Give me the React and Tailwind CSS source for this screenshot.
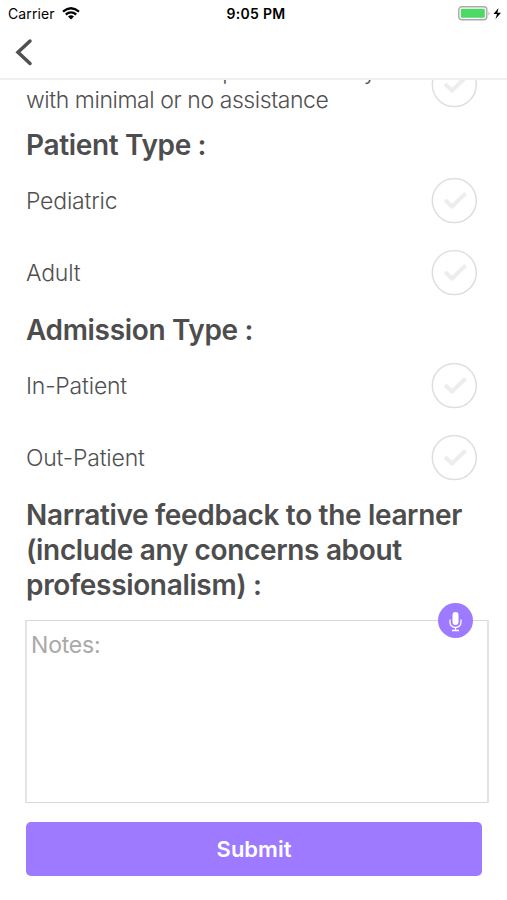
import React from "react";

function Check() {
  return (
    <svg className="h-[46px] w-[46px] shrink-0" viewBox="0 0 46 46" fill="none">
      <circle cx="23.3" cy="22.6" r="22" stroke="#dedede" strokeWidth="1.5" />
      <path d="M14 22l7 6.5L34.5 15.5" stroke="#ededed" strokeWidth="4" />
    </svg>
  );
}

function Option({ label }) {
  return (
    <div className="flex h-[72px] items-center justify-between pr-[30px]">
      <span className="text-[23px] font-light tracking-[-0.2px]">{label}</span>
      <Check />
    </div>
  );
}

function Heading({ children }) {
  return <h2 className="text-[28px] font-semibold leading-[35px] tracking-[-0.34px] whitespace-nowrap text-[#4d4d4d]">{children}</h2>;
}

export default function App() {
  return (
    <div className="flex h-[900px] w-[507px] flex-col overflow-hidden bg-white font-['Inter',sans-serif] text-[#505050]">
      <header className="relative z-10 h-[80px] shrink-0 border-b-2 border-[#f0f0f0] bg-white">
        <div className="grid h-[27px] grid-cols-3 items-center pl-2 pr-[5px] text-black">
          <div className="flex items-center gap-[7px]">
            <span className="text-[14px] tracking-[0.1px]">Carrier</span>
            <svg width="18" height="13" viewBox="0 0 18 13" fill="none" stroke="#000" strokeWidth="2.3">
              <path d="M1 4.6Q9-2 17 4.6M3.8 7.5Q9 3.2 14.2 7.5" />
              <path d="M6 9.5Q9 7 12 9.5L9 12.5Z" fill="#000" stroke="none" />
            </svg>
          </div>
          <span className="pl-[2px] text-center text-[14px] font-semibold tracking-[0.3px]">9:05 PM</span>
          <svg className="justify-self-end" width="44" height="15" viewBox="0 0 44 15">
            <rect x=".8" y=".8" width="28" height="13" rx="3" fill="#fff" stroke="#a9a9a9" strokeWidth="1.4" />
            <rect x="2.8" y="2.8" width="24" height="9" rx="1" fill="#4cd964" />
            <path d="M30.5 5.5q2 2 0 4z" fill="#a9a9a9" />
            <path d="M40.5 2L35.5 8H39L37.5 13L43 6.7H39.4Z" fill="#000" />
          </svg>
        </div>
        <svg className="ml-[15px] mt-[11px]" width="18" height="28" viewBox="0 0 18 28" fill="none">
          <path d="M15 3L3 14.3L15 25.5" stroke="#505050" strokeWidth="3.5" strokeLinecap="round" />
        </svg>
      </header>
      <main className="flex flex-col pl-[26px]">
        <div className="-mt-[23px] flex h-[71px] items-start justify-between pr-[30px]">
          <p className="text-[23px] font-light leading-[29px] tracking-[-0.43px] whitespace-nowrap">
            <span className="tracking-[-0.22px]">Could do this on a patient entirely</span><br />with minimal or no assistance
          </p>
          <div className="mt-[5px]"><Check /></div>
        </div>
        <Heading>Patient Type :</Heading>
        <div className="mt-[2px]"><Option label="Pediatric" /><Option label="Adult" /></div>
        <div className="mt-[4px]"><Heading>Admission Type :</Heading></div>
        <div className="mt-[2px]"><Option label="In-Patient" /><Option label="Out-Patient" /></div>
        <div className="mt-[4px]">
          <Heading>Narrative feedback to the learner<br />(include any concerns about<br />professionalism) :</Heading>
        </div>
        <div className="relative -ml-px mt-[17px] h-[183px] w-[464px] border-x-2 border-y border-x-[#e4e4e4] border-y-[#d8d8d8] px-[4px] pt-[7px]">
          <span className="text-[23px] tracking-[-0.2px] text-[#a9a9a9]">Notes:</span>
          <div className="absolute -top-[18px] right-[14px] h-[35px] w-[35px] rounded-full bg-[#9d7aff]">
            <svg width="35" height="35" viewBox="0 0 35 35" fill="none" stroke="#fff">
              <rect x="14.5" y="9" width="6" height="13" rx="3" fill="#fff" stroke="none" />
              <path d="M12 16.5v3a5.5 5 0 0 0 11 0v-3M17.5 24.5v3M14 27.5h7" strokeWidth="1.3" />
            </svg>
          </div>
        </div>
        <button className="mt-[19px] h-[54px] w-[456px] rounded-[5px] bg-[#9d7aff] text-[22px] font-semibold text-white">Submit</button>
      </main>
    </div>
  );
}
